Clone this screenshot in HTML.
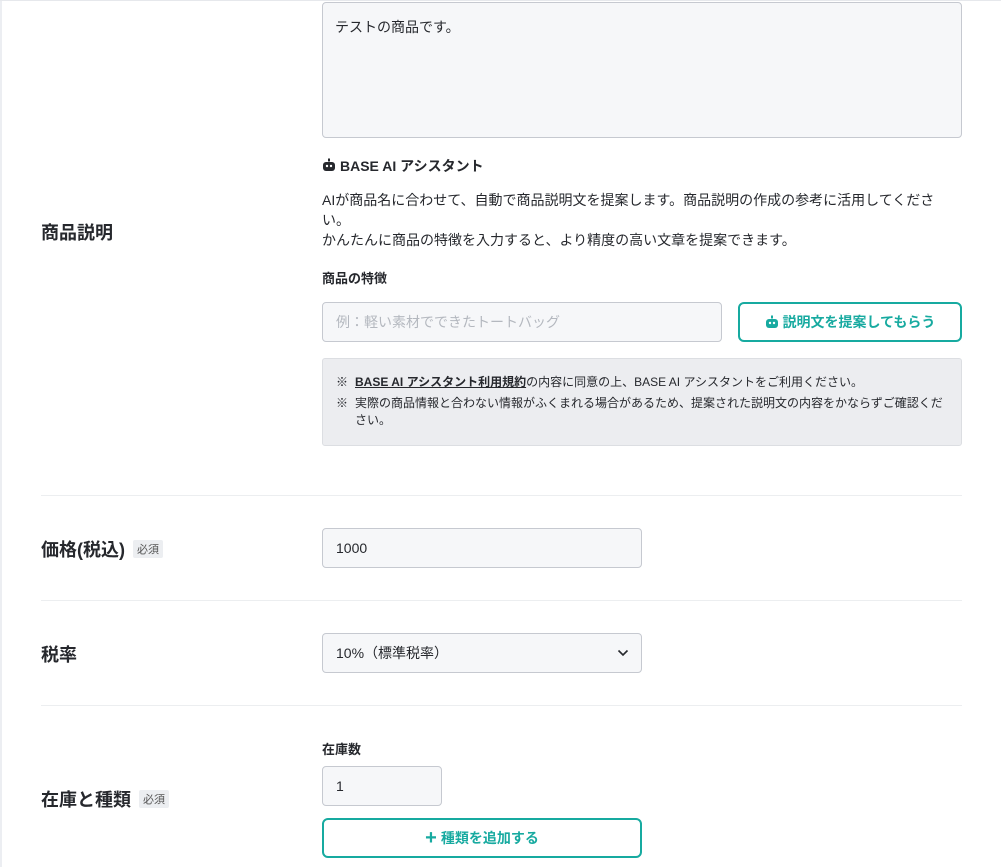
<!DOCTYPE html>
<html><head><meta charset="utf-8"><style>
*{box-sizing:border-box;margin:0;padding:0}
body{width:1001px;height:867px;background:#fff;font-family:"Liberation Sans","Noto Sans CJK JP",sans-serif;color:#26282d;position:relative;overflow:hidden}
.a{position:absolute}
.box{position:absolute;background:#f6f7f9;border:1px solid #c6c9d0;border-radius:4px}
.lbl{position:absolute;left:41px;font-size:18px;font-weight:bold}
.req{display:inline-block;font-size:11px;font-weight:normal;background:#eceef1;color:#555;padding:1px 4px;margin-left:8px;border-radius:2px;vertical-align:3px}
.hr{position:absolute;left:41px;width:921px;height:1px;background:#eceef0}
.btn{position:absolute;border:2px solid #17aaa0;border-radius:6px;color:#17aaa0;font-weight:bold;font-size:14px;display:flex;align-items:center;justify-content:center;background:#fff}
</style></head><body>
<div class="a" style="left:0;top:0;width:2px;height:867px;background:#eceef2"></div>
<div class="a" style="left:0;top:0;width:1001px;height:1px;background:#e6e8ec"></div>
<div class="box" style="left:322px;top:2px;width:640px;height:136px;padding:14px 12px;font-size:14px">テストの商品です。</div>
<div class="a" style="left:322px;top:156px;font-size:14px;font-weight:bold"><svg width="14" height="14" viewBox="0 0 14 14" style="vertical-align:-1px;margin-right:4px"><rect x="6" y="0.5" width="2" height="3" fill="#26282d"/><rect x="1" y="4" width="12" height="9" rx="3" fill="#26282d"/><circle cx="5" cy="8" r="1.2" fill="#fff"/><circle cx="9" cy="8" r="1.2" fill="#fff"/></svg>BASE AI アシスタント</div>
<div class="a" style="left:322px;top:190px;width:630px;font-size:14px;line-height:20px">AIが商品名に合わせて、自動で商品説明文を提案します。商品説明の作成の参考に活用してください。<br>かんたんに商品の特徴を入力すると、より精度の高い文章を提案できます。</div>
<div class="lbl" style="top:219px">商品説明</div>
<div class="a" style="left:322px;top:268px;font-size:13px;font-weight:bold">商品の特徴</div>
<div class="box" style="left:322px;top:302px;width:400px;height:40px;padding:0 13px;line-height:38px;font-size:14px;color:#b4b8bf">例：軽い素材でできたトートバッグ</div>
<div class="btn" style="left:738px;top:302px;width:224px;height:40px"><svg width="14" height="14" viewBox="0 0 14 14" style="margin-right:4px"><rect x="6" y="0.5" width="2" height="3" fill="#17aaa0"/><rect x="1" y="4" width="12" height="9" rx="3" fill="#17aaa0"/><circle cx="5" cy="8" r="1.2" fill="#fff"/><circle cx="9" cy="8" r="1.2" fill="#fff"/></svg>説明文を提案してもらう</div>
<div class="a" style="left:322px;top:358px;width:640px;height:88px;background:#ecedf0;border:1px solid #dcdee2;border-radius:3px;font-size:12px;line-height:17px;padding:15px 18px 0 13px">
<div style="display:flex;margin-bottom:4px"><span style="width:19px;flex:none">※</span><span><b style="text-decoration:underline">BASE AI アシスタント利用規約</b>の内容に同意の上、BASE AI アシスタントをご利用ください。</span></div>
<div style="display:flex"><span style="width:19px;flex:none">※</span><span>実際の商品情報と合わない情報がふくまれる場合があるため、提案された説明文の内容をかならずご確認ください。</span></div>
</div>
<div class="hr" style="top:495px"></div>
<div class="lbl" style="top:536px">価格(税込)<span class="req">必須</span></div>
<div class="box" style="left:322px;top:528px;width:320px;height:40px;padding:0 13px;line-height:38px;font-size:14px">1000</div>
<div class="hr" style="top:600px"></div>
<div class="lbl" style="top:641px">税率</div>
<div class="box" style="left:322px;top:633px;width:320px;height:40px;padding:0 13px;line-height:38px;font-size:14px">10%（標準税率）<svg class="a" style="right:12px;top:14px" width="12" height="10" viewBox="0 0 12 10"><path d="M1.5 2.5L6 7l4.5-4.5" stroke="#26282d" stroke-width="1.6" fill="none"/></svg></div>
<div class="hr" style="top:705px"></div>
<div class="a" style="left:322px;top:739px;font-size:13px;font-weight:bold">在庫数</div>
<div class="box" style="left:322px;top:766px;width:120px;height:40px;padding:0 13px;line-height:38px;font-size:14px">1</div>
<div class="lbl" style="top:786px">在庫と種類<span class="req">必須</span></div>
<div class="btn" style="left:322px;top:818px;width:320px;height:40px"><span style="font-size:20px;margin-right:4px;line-height:14px">+</span>種類を追加する</div>
</body></html>
